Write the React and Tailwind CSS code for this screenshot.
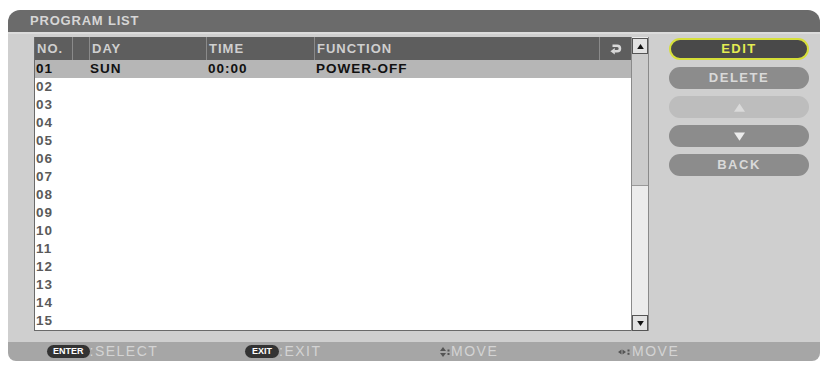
import React from "react";

const rows = ["01","02","03","04","05","06","07","08","09","10","11","12","13","14","15"];

function RepeatIcon() {
  return (
    <svg width="14" height="14" viewBox="0 0 12 12">
      <path d="M3 3.2 H7 A2.4 2.4 0 0 1 7 8 H4.5" fill="none" stroke="#d8d8d8" strokeWidth="2.2" />
      <path d="M1.2 8 L5 5.2 L5 10.8 Z" fill="#d8d8d8" />
    </svg>
  );
}

function Tri({ up, color = "#111", w = 7, h = 5 }) {
  return (
    <svg width={w} height={h} viewBox="0 0 8 6">
      {up ? <path d="M0 6 L4 0 L8 6 Z" fill={color} /> : <path d="M0 0 L8 0 L4 6 Z" fill={color} />}
    </svg>
  );
}

function Btn({ children, cls }) {
  return (
    <div className={`h-[22px] w-[140px] rounded-full flex items-center justify-center text-[13px] font-bold tracking-[1.5px] ${cls}`}>
      {children}
    </div>
  );
}

export default function App() {
  return (
    <div className="w-[824px] h-[365px] bg-white pt-[10px] pl-[8px]" style={{ fontFamily: '"Liberation Sans", Arial, sans-serif' }}>
      <div className="w-[812px] h-[351px] flex flex-col rounded-t-[12px] rounded-b-[8px] overflow-hidden">
        {/* title */}
        <div className="h-[22px] bg-[#6b6b6b] pl-[22px] flex items-center text-[13px] font-bold tracking-[0.8px] text-[#d6d6d6]">
          PROGRAM LIST
        </div>
        {/* body */}
        <div className="flex-1 bg-[#cfcfcf] border-t-2 border-[#dcdcdc] flex pt-[3px] pl-[26px]">
          {/* table */}
          <div className="flex h-[294px]">
            <div className="w-[597px] flex flex-col bg-white border-l border-b border-[#6a6a6a]">
              {/* header */}
              <div className="h-[23px] bg-[#5e5e5e] flex items-center text-[13px] font-bold tracking-[1px] text-[#cfcfcf]">
                <div className="w-[37px] pl-[2px]">NO.</div>
                <div className="w-[17px] h-full border-l border-[#8a8a8a]"></div>
                <div className="w-[117px] h-full border-l border-[#8a8a8a] pl-[2px] flex items-center">DAY</div>
                <div className="w-[108px] h-full border-l border-[#8a8a8a] pl-[2px] flex items-center">TIME</div>
                <div className="w-[285px] h-full border-l border-[#8a8a8a] pl-[2px] flex items-center">FUNCTION</div>
                <div className="flex-1 h-full border-l border-[#8a8a8a] flex items-center justify-center">
                  <RepeatIcon />
                </div>
              </div>
              {rows.map((r, i) => (
                <div
                  key={r}
                  className={`h-[18px] flex items-center text-[13.5px] tracking-[1px] ${i === 0 ? "bg-[#b6b6b6] font-bold text-[#111]" : "text-[#5a5a5a] font-semibold"}`}
                >
                  <div className="w-[54px] pl-[1px]">{r}</div>
                  {i === 0 && (
                    <>
                      <div className="w-[118px] pl-[1px]">SUN</div>
                      <div className="w-[108px] pl-[1px]">00:00</div>
                      <div className="pl-[1px]">POWER-OFF</div>
                    </>
                  )}
                </div>
              ))}
            </div>
            {/* scrollbar */}
            <div className="w-[18px] flex flex-col bg-[#ececec] border-l border-r border-[#8a8a8a]">
              <div className="h-[16px] mt-[1px] bg-[#e2e2e2] border border-[#555] flex items-center justify-center">
                <Tri up />
              </div>
              <div className="h-[132px] bg-[#cbcbcb] border-b border-[#999]"></div>
              <div className="flex-1"></div>
              <div className="h-[16px] bg-[#e2e2e2] border border-[#555] flex items-center justify-center">
                <Tri />
              </div>
            </div>
          </div>
          {/* buttons */}
          <div className="ml-[20px] flex flex-col gap-[7px] pt-[1px]">
            <Btn cls="bg-[#494949] border-2 border-[#d6df3a] text-[#e4ec52]">EDIT</Btn>
            <Btn cls="bg-[#8c8c8c] text-[#d9d9d9]">DELETE</Btn>
            <Btn cls="bg-[#bdbdbd]"><Tri up color="#dadada" w={11} h={9} /></Btn>
            <Btn cls="bg-[#8c8c8c]"><Tri color="#ececec" w={11} h={9} /></Btn>
            <Btn cls="bg-[#8c8c8c] text-[#d9d9d9]">BACK</Btn>
          </div>
        </div>
        {/* footer */}
        <div className="h-[19px] bg-[#a6a6a6] flex items-center pl-[39px] text-[14px] tracking-[1.5px] text-[#d4d4d4]">
          <div className="w-[198px] flex items-center">
            <span className="h-[13px] px-[6px] rounded-full bg-[#333] text-white text-[9px] font-bold tracking-normal flex items-center">ENTER</span>
            <span>:SELECT</span>
          </div>
          <div className="w-[195px] flex items-center">
            <span className="h-[13px] px-[7px] rounded-full bg-[#333] text-white text-[9px] font-bold tracking-normal flex items-center">EXIT</span>
            <span>:EXIT</span>
          </div>
          <div className="w-[178px] flex items-center gap-[1px]">
            <svg width="10" height="10" viewBox="0 0 10 10">
              <path d="M0 4 L3 0 L6 4 Z M0 6 L3 10 L6 6 Z" fill="#555" />
              <rect x="7.5" y="2.5" width="2" height="2" fill="#555" />
              <rect x="7.5" y="6" width="2" height="2" fill="#555" />
            </svg>
            <span>MOVE</span>
          </div>
          <div className="flex items-center gap-[2px]">
            <svg width="12" height="8" viewBox="0 0 12 8">
              <path d="M0 4 L3.5 1.5 L3.5 6.5 Z M8 4 L4.5 1.5 L4.5 6.5 Z" fill="#555" />
              <rect x="9.5" y="1.5" width="2" height="2" fill="#555" />
              <rect x="9.5" y="4.8" width="2" height="2" fill="#555" />
            </svg>
            <span>MOVE</span>
          </div>
        </div>
      </div>
    </div>
  );
}
